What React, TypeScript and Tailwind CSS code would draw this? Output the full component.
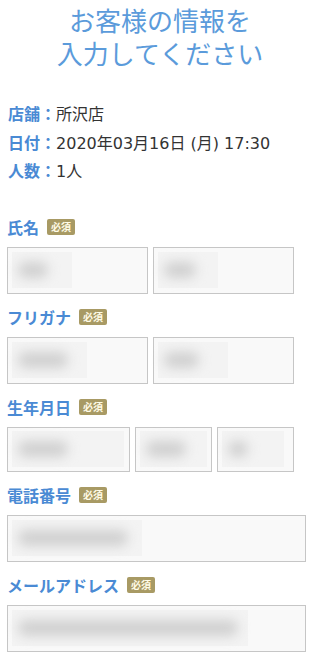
import React from 'react';

const font = { fontFamily: '"Noto Sans CJK JP", "Noto Sans", sans-serif' };
const valueFont = { fontFamily: '"DejaVu Sans", "Noto Sans CJK JP", sans-serif' };

const Badge: React.FC = () => (
  <span className="ml-2 inline-flex h-[16px] items-center rounded-[2px] bg-[#a89a64] px-[4px] text-[10px] font-bold leading-none text-[#fffbe6]">
    必須
  </span>
);

const Label: React.FC<{ text: string }> = ({ text }) => (
  <div className="flex h-[20px] items-center">
    <span className="text-[16px] font-bold leading-none text-[#4a8ad4]">{text}</span>
    <Badge />
  </div>
);

// blurred placeholder standing in for the masked value
const Field: React.FC<{ w: string; h?: string; blob: string; block: string }> = ({ w, h = 'h-[47px]', blob, block }) => (
  <div className={`${w} ${h} flex items-center border border-[#c6c6c6] bg-[#f9f9f9] px-[4px]`}>
    <div className={`${block} flex h-[36px] items-center bg-[#f3f3f3] px-[6px]`}>
      <div className={`${blob} h-[16px] rounded-full bg-[#d0d0d0] blur-[6px]`} />
    </div>
  </div>
);

const App: React.FC = () => {
  return (
    <div className="min-h-screen w-[320px] bg-white text-[#333]" style={font}>
      {/* Title */}
      <h1 className="pt-[3px] text-center text-[26px] font-normal leading-[33px] text-[#5b9bdb]">
        お客様の情報を
        <br />
        入力してください
      </h1>

      {/* Reservation summary */}
      <div className="mt-[31px] flex flex-col px-[8px] text-[16px] leading-[27.5px]">
        <div>
          <span className="font-bold text-[#4a8ad4]">店舗：</span>
          <span style={valueFont}>所沢店</span>
        </div>
        <div>
          <span className="font-bold text-[#4a8ad4]">日付：</span>
          <span style={valueFont}>2020年03月16日 (月) 17:30</span>
        </div>
        <div>
          <span className="font-bold text-[#4a8ad4]">人数：</span>
          <span style={valueFont}>1人</span>
        </div>
      </div>

      {/* Form */}
      <div className="mt-[31px] flex flex-col px-[7px]">
        <Label text="氏名" />
        <div className="mt-[10px] flex gap-[5px]">
          <Field w="w-[141px]" block="w-[60px]" blob="w-[30px]" />
          <Field w="w-[141px]" block="w-[60px]" blob="w-[32px]" />
        </div>

        <div className="mt-[13px]">
          <Label text="フリガナ" />
        </div>
        <div className="mt-[10px] flex gap-[5px]">
          <Field w="w-[141px]" block="w-[75px]" blob="w-[50px]" />
          <Field w="w-[141px]" block="w-[70px]" blob="w-[35px]" />
        </div>

        <div className="mt-[13px]">
          <Label text="生年月日" />
        </div>
        <div className="mt-[10px] flex gap-[5px]">
          <Field w="w-[123px]" h="h-[45px]" block="w-[112px]" blob="w-[50px]" />
          <Field w="w-[77px]" h="h-[45px]" block="w-[68px]" blob="w-[40px]" />
          <Field w="w-[77px]" h="h-[45px]" block="w-[62px]" blob="w-[20px]" />
        </div>

        <div className="mt-[13px]">
          <Label text="電話番号" />
        </div>
        <div className="mt-[10px] flex">
          <Field w="w-[299px]" block="w-[130px]" blob="w-[110px]" />
        </div>

        <div className="mt-[13px]">
          <Label text="メールアドレス" />
        </div>
        <div className="mt-[10px] flex">
          <Field w="w-[299px]" block="w-[236px]" blob="w-[220px]" />
        </div>
      </div>
    </div>
  );
};

export default App;
